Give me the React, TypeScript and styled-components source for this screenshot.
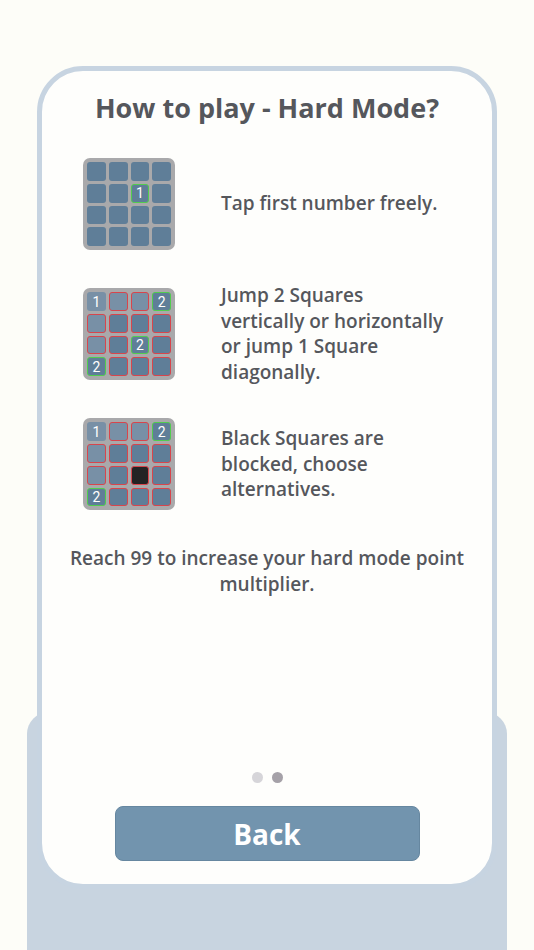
import styled, { createGlobalStyle } from "styled-components";

type Tone = "plain" | "faded" | "blocked";
type Mark = "none" | "red" | "green";
type CellSpec = { tone?: Tone; mark?: Mark; label?: string };

const GlobalStyle = createGlobalStyle`
    html, body {
        margin: 0;
        padding: 0;
        background: #fdfdf8;
    }
    body {
        font-family: "Open Sans", "Noto Sans", sans-serif;
        color: #55575c;
    }
`;

const c = (tone: Tone = "plain", mark: Mark = "none", label?: string): CellSpec => ({
    tone,
    mark,
    label,
});

const firstBoard: CellSpec[] = [
    c(), c(), c(), c(),
    c(), c(), c("plain", "green", "1"), c(),
    c(), c(), c(), c(),
    c(), c(), c(), c(),
];

const jumpBoard: CellSpec[] = [
    c("faded", "none", "1"), c("faded", "red"), c("faded", "red"), c("plain", "green", "2"),
    c("faded", "red"), c("plain", "red"), c("plain", "red"), c("plain", "red"),
    c("faded", "red"), c("plain", "red"), c("plain", "green", "2"), c("plain", "red"),
    c("plain", "green", "2"), c("plain", "red"), c("plain", "red"), c("plain", "red"),
];

const blockedBoard: CellSpec[] = [
    c("faded", "none", "1"), c("faded", "red"), c("faded", "red"), c("plain", "green", "2"),
    c("faded", "red"), c("plain", "red"), c("plain", "red"), c("plain", "red"),
    c("faded", "red"), c("plain", "red"), c("blocked", "red"), c("plain", "red"),
    c("plain", "green", "2"), c("plain", "red"), c("plain", "red"), c("plain", "red"),
];

const steps = [
    { board: firstBoard, text: "Tap first number freely." },
    {
        board: jumpBoard,
        text: "Jump 2 Squares vertically or horizontally or jump 1 Square diagonally.",
    },
    { board: blockedBoard, text: "Black Squares are blocked, choose alternatives." },
];

const App = () => {
    return (
        <>
            <GlobalStyle />
            <Screen>
                <Card>
                    <Title>How to play - Hard Mode?</Title>
                    <Steps>
                        {steps.map((step, i) => (
                            <Step key={i}>
                                <Board>
                                    {step.board.map((cell, j) => (
                                        <Cell key={j} $tone={cell.tone ?? "plain"} $mark={cell.mark ?? "none"}>
                                            {cell.label}
                                        </Cell>
                                    ))}
                                </Board>
                                <StepText>{step.text}</StepText>
                            </Step>
                        ))}
                    </Steps>
                    <Note>Reach 99 to increase your hard mode point multiplier.</Note>
                    <Footer>
                        <Dots>
                            <Dot />
                            <Dot $active />
                        </Dots>
                        <BackButton>Back</BackButton>
                    </Footer>
                </Card>
                <Shelf />
            </Screen>
        </>
    );
};
export default App;

const Screen = styled.div`
    width: 534px;
    height: 950px;
    overflow: hidden;
    padding-top: 66px;
    box-sizing: border-box;
    display: flex;
    flex-direction: column;
    align-items: center;
`;

const Card = styled.div`
    position: relative;
    z-index: 1;
    width: 460px;
    height: 823px;
    flex-shrink: 0;
    box-sizing: border-box;
    border: 5px solid #c7d4e1;
    border-radius: 46px;
    background: #fefefc;
    display: flex;
    flex-direction: column;
    align-items: center;
    padding: 18px 0 23px;
`;

const Shelf = styled.div`
    width: 480px;
    height: 260px;
    flex-shrink: 0;
    margin-top: -177px;
    background: #c8d4e0;
    border-radius: 22px 22px 0 0;
`;

const Title = styled.h1`
    margin: 0;
    font-size: 27px;
    font-weight: 700;
    line-height: 38px;
    color: #55575c;
`;

const Steps = styled.div`
    align-self: stretch;
    display: flex;
    flex-direction: column;
    gap: 33px;
    margin-top: 31px;
    padding-left: 41px;
`;

const Step = styled.div`
    display: flex;
    align-items: center;
    gap: 46px;
`;

const Board = styled.div`
    width: 92px;
    height: 92px;
    flex-shrink: 0;
    box-sizing: border-box;
    padding: 4px;
    border-radius: 7px;
    background: #a9a9ab;
    display: grid;
    grid-template-columns: repeat(4, 1fr);
    grid-template-rows: repeat(4, 1fr);
    gap: 3px;
`;

const toneColor: Record<Tone, string> = {
    plain: "#5f7e98",
    faded: "#7890a6",
    blocked: "#232324",
};

const markColor: Record<Mark, string> = {
    none: "transparent",
    red: "#d8454c",
    green: "#52cc4f",
};

const Cell = styled.div<{ $tone: Tone; $mark: Mark }>`
    box-sizing: border-box;
    border-radius: 3px;
    background: ${(p) => toneColor[p.$tone]};
    border: 1.5px solid ${(p) => markColor[p.$mark]};
    display: flex;
    align-items: center;
    justify-content: center;
    color: #ffffff;
    font-family: Roboto, "Open Sans", sans-serif;
    font-size: 14px;
    font-weight: 400;
    line-height: 1;
`;

const StepText = styled.p`
    margin: 0;
    width: 230px;
    font-size: 19px;
    font-weight: 600;
    line-height: 25.6px;
    color: #55575c;
`;

const Note = styled.p`
    margin: 36px 0 0;
    width: 410px;
    text-align: center;
    font-size: 19px;
    font-weight: 600;
    line-height: 25.6px;
    color: #55575c;
`;

const Footer = styled.div`
    margin-top: auto;
    display: flex;
    flex-direction: column;
    align-items: center;
    gap: 23px;
`;

const Dots = styled.div`
    display: flex;
    gap: 9px;
`;

const Dot = styled.span<{ $active?: boolean }>`
    width: 11px;
    height: 11px;
    border-radius: 50%;
    background: ${(p) => (p.$active ? "#a5a1a8" : "#d6d5d9")};
`;

const BackButton = styled.button`
    width: 305px;
    height: 55px;
    box-sizing: border-box;
    border: 1px solid #6687a0;
    border-radius: 8px;
    background: #7294ae;
    color: #ffffff;
    font-family: "Open Sans", "Noto Sans", sans-serif;
    font-size: 28px;
    font-weight: 700;
    cursor: pointer;
`;
